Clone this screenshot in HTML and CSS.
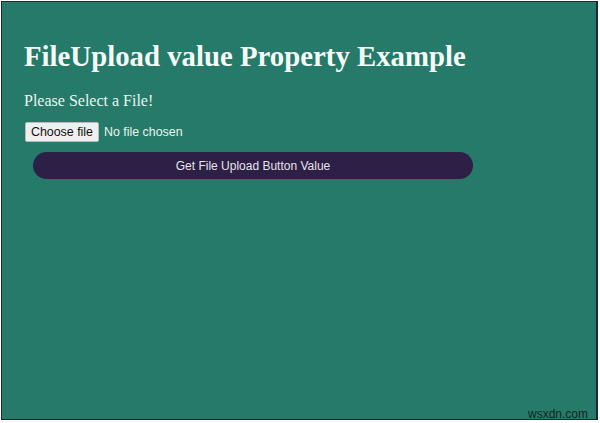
FILE: index.html
```html
<!DOCTYPE html>
<html>
<head>
<meta charset="utf-8">
<link rel="stylesheet" href="styles.css">
</head>
<body>
<div class="frame">
  <h1 class="title">FileUpload value Property Example</h1>
  <p class="prompt">Please Select a File!</p>
  <div class="file">
    <span class="file-btn">Choose file</span>
    <span class="file-name">No file chosen</span>
  </div>
  <button class="action" type="button">Get File Upload Button Value</button>
  <span class="mark">wsxdn.com</span>
</div>
</body>
</html>
```
FILE: styles.css
```css
html, body {
  margin: 0;
  padding: 0;
  background: #ffffff;
}
body {
  padding: 1px 0 0 1px;
}
.frame {
  position: relative;
  box-sizing: border-box;
  width: 597px;
  height: 419px;
  border: 1px solid #1e2a27;
  border-right-width: 2px;
  background: #267a69;
  padding: 1px 22px 0 22px;
  display: flex;
  flex-direction: column;
  align-items: flex-start;
  font-family: "Liberation Serif", "Times New Roman", serif;
  color: #f4fbf8;
}
.title {
  margin: 36px 0 0 0;
  font-size: 28.8px;
  font-weight: bold;
  line-height: 34px;
}
.prompt {
  margin: 18px 0 0 0;
  font-size: 16px;
  line-height: 20px;
  color: #e9f4f0;
}
.file {
  margin: 11px 0 0 1px;
  display: flex;
  align-items: center;
  gap: 5px;
  font-family: "Liberation Sans", Arial, sans-serif;
  font-size: 12.4px;
}
.file-btn {
  box-sizing: border-box;
  height: 20px;
  width: 74px;
  display: flex;
  align-items: center;
  justify-content: center;
  color: #111;
  background: #efefef;
  border: 1px solid #b9bcbb;
  border-radius: 2px;
}
.file-name {
  color: #e9f4f0;
}
.action {
  margin: 10px 0 0 9px;
  width: 440px;
  height: 27px;
  border: none;
  border-radius: 14px;
  background: #2d1f45;
  color: #e6e3ec;
  font-family: "Liberation Sans", Arial, sans-serif;
  font-size: 12px;
  padding: 0;
}
.mark {
  position: absolute;
  right: 8px;
  bottom: -1px;
  font-family: "Liberation Sans", Arial, sans-serif;
  font-size: 12px;
  line-height: 12px;
  color: #16241f;
}
```
